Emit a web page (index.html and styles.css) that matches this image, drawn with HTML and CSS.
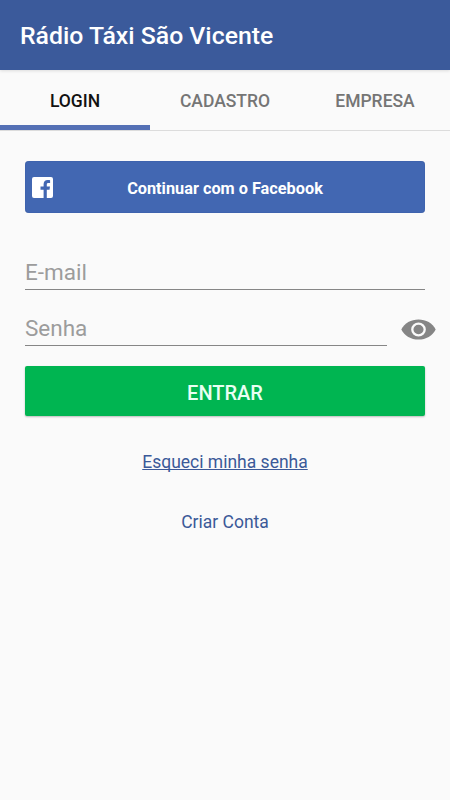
FILE: index.html
```html
<!DOCTYPE html>
<html lang="pt-BR">
<head>
    <meta charset="UTF-8">
    <meta name="viewport" content="width=device-width, initial-scale=1">
    <title>Rádio Táxi São Vicente</title>
    <link rel="stylesheet" href="styles.css">
</head>
<body>
    <header class="toolbar">
        <h1>Rádio Táxi São Vicente</h1>
    </header>

    <nav class="tabs">
        <button class="tab active">LOGIN</button>
        <button class="tab">CADASTRO</button>
        <button class="tab">EMPRESA</button>
    </nav>

    <form class="login-form">
        <button type="button" class="facebook-button">
            <svg class="facebook-icon" viewBox="0 0 21 21">
                <path fill="#fff" d="M2 0H19Q21 0 21 2V19Q21 21 19 21H14.8V12.8H17.5L18 9.6H14.8V7.6C14.8 6.6 15.2 6.1 16.4 6.1H18.1V3.2C17.7 3.1 16.8 3 15.7 3C13.2 3 11.6 4.5 11.6 7.2V9.6H8.5V12.8H11.6V21H2Q0 21 0 19V2Q0 0 2 0Z"/>
            </svg>
            <span>Continuar com o Facebook</span>
        </button>

        <input type="email" class="field email" placeholder="E-mail">

        <div class="password-row">
            <input type="password" class="field password" placeholder="Senha">
            <button type="button" class="show-password" aria-label="Mostrar senha">
                <svg viewBox="0 0 35 21">
                    <path fill="#858585" d="M0.3 10.5C3.5 4 10 0.4 17.5 0.4S31.5 4 34.7 10.5C31.5 17 25 20.6 17.5 20.6S3.5 17 0.3 10.5Z"/>
                    <ellipse cx="17.5" cy="10.5" rx="6.2" ry="5.9" fill="#858585" stroke="#fafafa" stroke-width="2.3"/>
                </svg>
            </button>
        </div>

        <button type="button" class="submit-button">ENTRAR</button>

        <a href="#" class="link forgot">Esqueci minha senha</a>
        <a href="#" class="link create">Criar Conta</a>
    </form>
</body>
</html>
```
FILE: styles.css
```css
* {
    box-sizing: border-box;
}

body {
    margin: 0;
    min-height: 100vh;
    background-color: #fafafa;
    font-family: Roboto, sans-serif;
}

button {
    padding: 0;
    border: none;
    background: none;
    font-family: inherit;
    cursor: pointer;
}

.toolbar {
    display: flex;
    align-items: center;
    height: 70px;
    padding: 0 20px;
    background-color: #3b5a9b;
    box-shadow: 0 1px 3px rgba(0, 0, 0, 0.12);
}

.toolbar h1 {
    margin: 0;
    font-size: 24.8px;
    font-weight: 500;
    color: #fff;
}

.tabs {
    display: flex;
    height: 61px;
    border-bottom: 1px solid #dcdcdc;
}

.tab {
    flex: 1;
    padding-top: 6px;
    border-bottom: 5px solid transparent;
    font-size: 17.5px;
    font-weight: 500;
    color: #757575;
}

.tab.active {
    border-bottom-color: #5470b5;
    color: #111;
}

.login-form {
    display: flex;
    flex-direction: column;
    padding: 30px 25px 0;
}

.facebook-button {
    display: flex;
    align-items: center;
    height: 52px;
    padding: 0 28px 0 7px;
    border-radius: 4px;
    background-color: #4267b2;
    box-shadow: inset 0 0 1px #24468c;
    font-size: 16.3px;
    font-weight: 700;
    color: #fff;
}

.facebook-button span {
    flex: 1;
    padding-top: 2px;
}

.facebook-icon {
    width: 21px;
    height: 21px;
}

.field {
    min-width: 0;
    padding: 0;
    border: none;
    border-bottom: 1px solid #868686;
    border-radius: 0;
    outline: none;
    background: none;
    font-family: inherit;
    font-size: 22.5px;
    color: #222;
}

.field::placeholder {
    color: #9c9c9c;
}

.email {
    height: 36px;
    margin-top: 41px;
}

.password-row {
    display: flex;
    align-items: flex-end;
    height: 36px;
    margin-top: 20px;
    margin-right: -11px;
}

.password {
    width: 362px;
    height: 36px;
}

.show-password {
    width: 35px;
    height: 21px;
    margin-left: auto;
    margin-bottom: 6px;
}

.show-password svg {
    display: block;
    width: 35px;
    height: 21px;
}

.submit-button {
    height: 50px;
    margin-top: 20px;
    padding-top: 3px;
    border-radius: 2px;
    background-color: #00b551;
    box-shadow: 0 1px 2px rgba(0, 0, 0, 0.25);
    font-size: 20px;
    font-weight: 500;
    color: #e9fff3;
}

.link {
    align-self: center;
    font-size: 17.5px;
    line-height: 20px;
    color: #3b5998;
    text-decoration: none;
}

.forgot {
    margin-top: 36px;
    text-decoration: underline;
    text-decoration-skip-ink: none;
}

.create {
    margin-top: 40px;
}
```
